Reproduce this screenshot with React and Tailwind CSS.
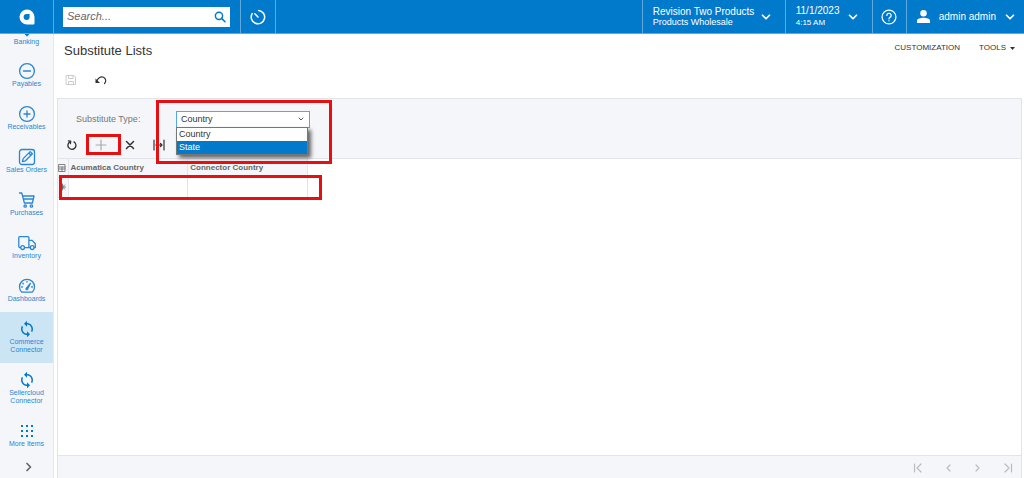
import { useState } from "react";
import { ChevronDown } from "lucide-react";
import { MdSync } from "react-icons/md";

const Icon = ({ size = "size-[18px]", width = 1.3, box = "0 0 18 18", children }) => (
  <svg
    className={`${size} shrink-0`}
    viewBox={box}
    fill="none"
    stroke="currentColor"
    strokeWidth={width}
    strokeLinecap="round"
    strokeLinejoin="round"
  >
    {children}
  </svg>
);

const menuItems = [
  {
    label: "Payables",
    icon: (
      <Icon>
        <circle cx="9" cy="9" r="7.4" />
        <path d="M5.5 9h7" />
      </Icon>
    ),
  },
  {
    label: "Receivables",
    icon: (
      <Icon>
        <circle cx="9" cy="9" r="7.4" />
        <path d="M6 9h6M9 6v6" />
      </Icon>
    ),
  },
  {
    label: "Sales Orders",
    icon: (
      <Icon>
        <rect x="1.5" y="1.5" width="15" height="15" rx="2.5" />
        <path d="M4.4 13.6l.8-3 7-7 2.2 2.2-7 7zM10.8 5l2.2 2.2" />
      </Icon>
    ),
  },
  {
    label: "Purchases",
    icon: (
      <Icon>
        <path d="M1.5 2h2.3l2.6 10h8l1.6-7H4.7M5.4 8h9.8" />
        <circle cx="7.2" cy="15" r="1.2" />
        <circle cx="13.4" cy="15" r="1.2" />
      </Icon>
    ),
  },
  {
    label: "Inventory",
    icon: (
      <Icon>
        <path d="M2.6 13.6H1.8a1 1 0 0 1-1-1V3.600a1 1 0 0 1 1-1h8.100a1 1 0 0 1 1 1v10H6.600M10.900 6.400h3.300l3.100 3.400v3.800h-1.100M10.900 13.600h1.300" />
        <circle cx="4.6" cy="13.6" r="1.9" />
        <circle cx="14.2" cy="13.6" r="1.9" />
      </Icon>
    ),
  },
  {
    label: "Dashboards",
    icon: (
      <Icon>
        <path d="M3.8 15.2a7.5 7.5 0 1 1 10.4 0z" />
        <path d="M8 11.6l4.4-5.2-3.2 6.2a.9.9 0 0 1-1.2-1zM9 4.3v.8M4.8 6.2l.5.5M3.6 10h.8M13.6 10h.8" />
      </Icon>
    ),
  },
  { label: "Commerce Connector", icon: <MdSync className="size-[18px] text-[#027acc]" />, active: true },
  { label: "Sellercloud Connector", icon: <MdSync className="size-[18px] text-[#027acc]" /> },
  {
    label: "More Items",
    icon: (
      <Icon>
        <g fill="#027acc" stroke="none">
          {[4, 9, 14].map((x) =>
            [4, 9, 14].map((y) => <rect key={`${x}-${y}`} x={x - 1} y={y - 1} width="2" height="2" />)
          )}
        </g>
      </Icon>
    ),
  },
];

const MenuItem = ({ icon, label, active }) => (
  <a
    href="#"
    className={`flex flex-col items-center px-1 pt-2 pb-[9px] text-center text-[7px] leading-2 text-[#2a86d1] ${
      active ? "bg-[#cce5f4]" : ""
    }`}
  >
    {icon}
    <span>{label}</span>
  </a>
);

const pagerButtons = [
  { label: "First page", path: "M1.5 1v8M8 1L4 5l4 4" },
  { label: "Previous page", path: "M7 2L4 5l3 3" },
  { label: "Next page", path: "M3 2l3 3-3 3" },
  { label: "Last page", path: "M2 1l4 4-4 4M8.5 1v8" },
];

const options = ["Country", "State"];

export default function SubstituteLists() {
  const [type, setType] = useState("Country");
  const [hovered, setHovered] = useState("State");

  return (
    <div className="flex h-screen flex-col bg-white font-['Liberation_Sans',Arial,sans-serif] text-[#333]">
      {/* Top bar */}
      <header className="flex h-[34px] shrink-0 border-b border-[#5fa9df] bg-[#027acc] text-white">
        <a href="#" aria-label="Home" className="flex w-[54px] items-center justify-center border-r border-[#5fa9df]">
          <svg className="size-4" viewBox="0 0 16 16">
            <path d="M8 .5A7.5 7.5 0 1 0 8 15.5h6.3a1.2 1.2 0 0 0 1.2-1.2V8A7.5 7.5 0 0 0 8 .5z" fill="#fff" />
            <path d="M7.6 5h3v3a3 3 0 1 1-3-3z" fill="#027acc" />
          </svg>
        </a>
        <div className="flex items-center pr-[10px] pl-[9px]">
          <div className="flex h-5 w-[167px] items-center bg-white pr-1">
            <input
              type="text"
              aria-label="Search"
              placeholder="Search..."
              className="min-w-0 flex-1 px-1 text-[11px] text-[#333] italic outline-none placeholder:text-[#666]"
            />
            <button aria-label="Run search" className="text-[#027acc]">
              <Icon size="size-3" box="0 0 12 12" width={1.5}>
                <circle cx="5" cy="4.8" r="3.6" />
                <path d="M7.6 7.4l3.4 3.4" />
              </Icon>
            </button>
          </div>
        </div>
        <button aria-label="Recent" className="flex w-9 items-center justify-center border-x border-[#5fa9df]">
          <Icon width={1.5}>
            <path d="M9.6 2.4A6.7 6.700 0 1 1 3.2 5.600M5.800 5.800L9 9" />
          </Icon>
        </button>
        <div className="ml-auto flex">
          <button className="flex items-center border-l border-[#5fa9df] px-[10px] text-left">
            <span className="flex w-[106px] flex-col text-[9px] leading-[11px] whitespace-nowrap">
              <span className="text-[10px]">Revision Two Products</span>
              <span>Products Wholesale</span>
            </span>
            <ChevronDown className="mr-[2px] size-[14px]" strokeWidth={3} />
          </button>
          <button className="flex items-center border-l border-[#5fa9df] px-[10px] text-left">
            <span className="flex w-[50px] flex-col text-[8px] leading-3">
              <span className="text-[10px]">11/1/2023</span>
              <span>4:15 AM</span>
            </span>
            <ChevronDown className="mr-[2px] size-[14px]" strokeWidth={3} />
          </button>
          <button aria-label="Help" className="flex w-[35px] items-center justify-center border-x border-[#5fa9df]">
            <Icon size="size-4" width={1.4}>
              <circle cx="9" cy="9" r="7.8" />
              <path d="M6.6 7.2a2.4 2.4 0 1 1 3.600 2.100c-.8.5-1.200.8-1.200 1.700M9 13.200v.1" />
            </Icon>
          </button>
          <button className="flex items-center pr-[7px] pl-[10px] text-[10px]">
            <svg className="size-[13px]" viewBox="0 0 12 12" fill="currentColor">
              <circle cx="6" cy="3" r="3" />
              <path d="M0 12V9.8C0 8 3.5 7.2 6 7.2s6 .8 6 2.6V12z" />
            </svg>
            <span className="mr-[7px] ml-[9px]">admin admin</span>
            <ChevronDown className="size-[14px]" strokeWidth={3} />
          </button>
        </div>
      </header>

      <div className="flex min-h-0 flex-1">
        {/* Sidebar */}
        <nav className="flex w-[54px] shrink-0 flex-col overflow-hidden border-r border-[#e6e9ee] bg-[#f4f6f9]">
          <a href="#" className="flex h-5 shrink-0 flex-col items-center text-[7px] leading-2 text-[#2a86d1]">
            <svg className="h-1 w-2" viewBox="0 0 8 4">
              <path d="M1.5 0h5L4 2.5z" fill="#027acc" />
            </svg>
            Banking
          </a>
          {menuItems.map((item) => (
            <MenuItem key={item.label} {...item} />
          ))}
          <button aria-label="Expand menu" className="mt-auto mb-[6px] ml-1 flex justify-center text-[#666]">
            <Icon size="size-[10px]" box="0 0 10 10" width={1.7}>
              <path d="M3 1.5L6.5 5 3 8.5" />
            </Icon>
          </button>
        </nav>

        <main className="flex min-w-0 flex-1 flex-col pr-[2px] pl-[3px]">
          <div className="flex items-start justify-between pt-[9px] pr-[7px] pl-[7px]">
            <h1 className="text-[13px] leading-4">Substitute Lists</h1>
            <div className="flex gap-[19px] text-[8px] leading-[10px]">
              <button>CUSTOMIZATION</button>
              <button className="flex items-center gap-1">
                TOOLS
                <svg className="h-[3px] w-[5px]" viewBox="0 0 5 3">
                  <path d="M0 0h5L2.5 3z" fill="currentColor" />
                </svg>
              </button>
            </div>
          </div>
          <div className="flex h-[39px] items-center gap-[18px] pt-[3px] pl-[8px]">
            <button aria-label="Save" className="text-[#ccc]">
              <Icon size="size-3" box="0 0 12 12" width={1}>
                <path d="M1.5 1.5h7.5l1.5 1.5v7.5h-9zM3.5 1.5v3h4.5v-3M3.5 10.5V7.5h5v3" />
              </Icon>
            </button>
            <button aria-label="Undo">
              <Icon size="size-3" box="0 0 12 12" width={1.2}>
                <path d="M1.5 7.5C3 3.5 6 2 8.5 3.2s3 4.300 1 6.300" />
                <path d="M.5 4.5v4.500h4.500z" fill="currentColor" stroke="none" />
              </Icon>
            </button>
          </div>

          {/* Grid panel */}
          <section className="flex min-h-0 flex-1 flex-col border border-b-0 border-[#e1e4e8]">
            <div className="border-b border-[#e1e4e8] bg-[#f4f6f9]">
              <div className="flex items-center pt-3 pl-[18px]">
                <label htmlFor="type" className="w-[100px] text-[9px] text-[#777]">
                  Substitute Type:
                </label>
                <div className="relative text-[9px]">
                  <select
                    id="type"
                    value={type}
                    onChange={(e) => setType(e.target.value)}
                    className="block h-[17px] w-[134px] appearance-none border border-[#56a8e0] bg-white px-1 text-[9px] leading-[15px] text-[#333] outline-none"
                  >
                    {options.map((option) => (
                      <option key={option}>{option}</option>
                    ))}
                  </select>
                  <ChevronDown className="pointer-events-none absolute top-1 right-[5px] size-2 text-[#555]" strokeWidth={3} />
                  <ul className="absolute top-4 left-0 z-10 w-[132px] border border-[#777] bg-white leading-[13px] shadow-[3px_3px_4px_rgba(0,0,0,0.6)]">
                    {options.map((option) => (
                      <li
                        key={option}
                        onMouseEnter={() => setHovered(option)}
                        onClick={() => setType(option)}
                        className={`px-[2px] ${hovered === option ? "bg-[#027acc] text-white" : ""}`}
                      >
                        {option}
                      </li>
                    ))}
                  </ul>
                  <div className="pointer-events-none absolute -top-[11px] -left-5 z-20 h-16 w-[176px] border-3 border-[#e60f12]" />
                </div>
              </div>

              <div className="flex h-[30px] items-center gap-[17px] pt-[3px] pl-[8px]">
                <button aria-label="Refresh">
                  <Icon size="size-3" box="0 0 12 12" width={1.3}>
                    <path d="M8 2.9a4 4 0 1 1-3.800-.2" />
                    <path d="M2.400 1.800l2.300.4-.3 2.500" />
                  </Icon>
                </button>
                <button aria-label="Add row" className="relative text-[#aaa]">
                  <Icon size="size-3" box="0 0 12 12" width={1.2}>
                    <path d="M6 1v10M1 6h10" />
                  </Icon>
                  <span className="absolute -top-[5px] -left-[9px] h-[21px] w-[35px] border-3 border-[#e60f12]" />
                </button>
                <button aria-label="Delete row">
                  <Icon size="size-3" box="0 0 12 12" width={1.5}>
                    <path d="M2.5 2.5l7 7M9.5 2.5l-7 7" />
                  </Icon>
                </button>
                <button aria-label="Fit to screen">
                  <Icon size="size-3" box="0 0 12 12" width={1.2}>
                    <path d="M1 1v10M11 1v10M3 6h6M4.5 4.5L3 6l1.500 1.500M7.500 4.500L9 6 7.500 7.500" />
                  </Icon>
                </button>
              </div>
            </div>

            <div className="relative flex-1">
              <table className="w-[250px] table-fixed border-collapse text-left text-[8px]">
                <thead>
                  <tr className="h-[18px] bg-[#f4f6f9] text-[#666]">
                    <th className="w-[10px] border-r border-b border-[#e1e4e8]">
                      <Icon size="size-2" box="0 0 8 8" width={0.8}>
                        <path d="M1 .5h6v7H1zM1 3h6M1 5h6M4 3v4.5" />
                      </Icon>
                    </th>
                    <th className="border-r border-b border-[#e1e4e8] px-[2px]">Acumatica Country</th>
                    <th className="border-r border-b border-[#e1e4e8] px-[2px]">Connector Country</th>
                  </tr>
                </thead>
                <tbody>
                  <tr className="h-5">
                    <td className="border-r border-b border-[#e1e4e8] bg-[#f4f6f9] text-[#666]">
                      <Icon size="size-2" box="0 0 8 8" width={0.9}>
                        <path d="M4.500 1v6M1.500 4h6M2.500 2l4 4M6.500 2l-4 4" />
                      </Icon>
                    </td>
                    <td className="border-r border-b border-[#e1e4e8]" />
                    <td className="border-r border-b border-[#e1e4e8]" />
                  </tr>
                </tbody>
              </table>
              <div className="pointer-events-none absolute top-4 left-px h-[25px] w-[263px] border-3 border-[#e60f12]" />
            </div>

            <footer className="flex h-[23px] items-center justify-end gap-5 border-t border-[#e1e4e8] bg-[#f4f6f9] pt-[2px] pr-2 text-[#bbb]">
              {pagerButtons.map((button) => (
                <button key={button.label} aria-label={button.label}>
                  <Icon size="size-[10px]" box="0 0 10 10" width={1.2}>
                    <path d={button.path} />
                  </Icon>
                </button>
              ))}
            </footer>
          </section>
        </main>
      </div>
    </div>
  );
}
